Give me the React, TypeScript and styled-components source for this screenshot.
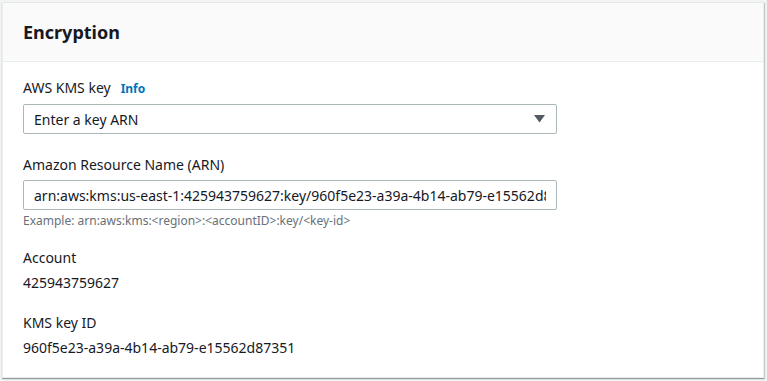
import { createGlobalStyle, styled } from 'styled-components'

const GlobalStyle = createGlobalStyle`
  html, body {
    margin: 0;
    padding: 0;
    background: #f2f3f3;
  }
  body {
    font-family: "Noto Sans", "Open Sans", Arial, sans-serif;
    color: #16191f;
  }
`;

const Page = styled.div`
  padding: 2px 3px 2px 2px;
`;

const Card = styled.section`
  background: #ffffff;
  border: 1px solid #eaeded;
  border-top-color: #e4e8e8;
  box-shadow: 0 1px 1px 0 rgba(0, 28, 36, 0.3), 1px 1px 1px 0 rgba(0, 28, 36, 0.15);
`;

const Header = styled.div`
  height: 58px;
  display: flex;
  align-items: center;
  padding: 0 20px;
  background: #fafafa;
  border-bottom: 1px solid #eaeded;
`;

const Title = styled.h2`
  margin: 0;
  font-size: 18px;
  font-weight: 700;
  line-height: 22px;
  color: #16191f;
`;

const Body = styled.div`
  padding: 15px 20px 18px;
  display: flex;
  flex-direction: column;
`;

const Field = styled.div<{ $gap?: number }>`
  display: flex;
  flex-direction: column;
  margin-top: ${p => p.$gap ?? 0}px;
`;

const Label = styled.div`
  display: flex;
  align-items: baseline;
  gap: 10px;
  font-size: 14px;
  line-height: 22px;
  color: #16191f;
`;

const InfoLink = styled.a`
  font-size: 12px;
  font-weight: 700;
  color: #0073bb;
  text-decoration: none;
`;

const Control = styled.div`
  width: 534px;
  height: 30px;
  box-sizing: border-box;
  margin-top: 4px;
  border: 1px solid #aab7b8;
  border-radius: 2px;
  display: flex;
  align-items: center;
  justify-content: space-between;
  padding: 0 10px 0 10px;
  font-size: 14px;
  color: #16191f;
  background: #fff;
  overflow: hidden;
  white-space: nowrap;
`;

const ControlText = styled.span`
  overflow: hidden;
  white-space: nowrap;
  flex: 1;
`;

const Arrow = styled.svg`
  flex: none;
  margin-right: 1px;
`;

const Hint = styled.div`
  margin-top: 3px;
  font-size: 12px;
  line-height: 16px;
  color: #687078;
`;

const Value = styled.div`
  margin-top: 3px;
  font-size: 14px;
  line-height: 22px;
  color: #16191f;
`;

export default function App() {
    return (
        <>
            <GlobalStyle />
            <Page>
                <Card>
                    <Header>
                        <Title>Encryption</Title>
                    </Header>
                    <Body>
                        <Field>
                            <Label>
                                AWS KMS key <InfoLink href="#">Info</InfoLink>
                            </Label>
                            <Control>
                                <ControlText>Enter a key ARN</ControlText>
                                <Arrow width="11" height="8" viewBox="0 0 11 8">
                                    <path d="M0 0 H11 L5.5 7.5 Z" fill="#545b64" />
                                </Arrow>
                            </Control>
                        </Field>
                        <Field $gap={20}>
                            <Label>Amazon Resource Name (ARN)</Label>
                            <Control>
                                <ControlText>arn:aws:kms:us-east-1:425943759627:key/960f5e23-a39a-4b14-ab79-e15562d87351</ControlText>
                            </Control>
                            <Hint>Example: arn:aws:kms:&lt;region&gt;:&lt;accountID&gt;:key/&lt;key-id&gt;</Hint>
                        </Field>
                        <Field $gap={18}>
                            <Label>Account</Label>
                            <Value>425943759627</Value>
                        </Field>
                        <Field $gap={18}>
                            <Label>KMS key ID</Label>
                            <Value>960f5e23-a39a-4b14-ab79-e15562d87351</Value>
                        </Field>
                    </Body>
                </Card>
            </Page>
        </>
    )
}
